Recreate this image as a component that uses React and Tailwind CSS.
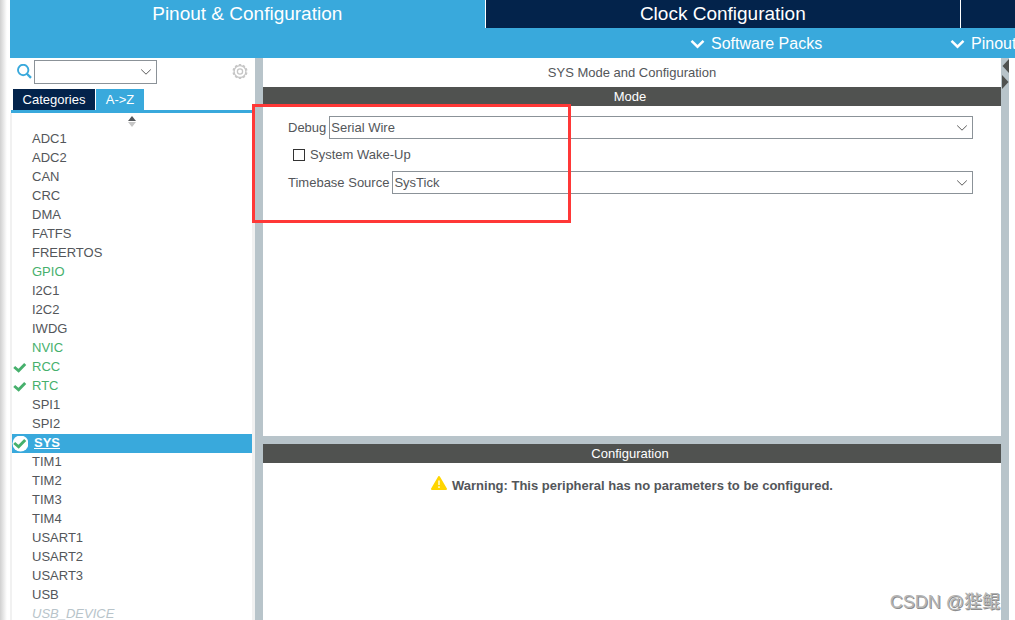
import React from "react";
import clsx from "clsx";

const peripherals = [
  { name: "ADC1" },
  { name: "ADC2" },
  { name: "CAN" },
  { name: "CRC" },
  { name: "DMA" },
  { name: "FATFS" },
  { name: "FREERTOS" },
  { name: "GPIO", state: "on" },
  { name: "I2C1" },
  { name: "I2C2" },
  { name: "IWDG" },
  { name: "NVIC", state: "on" },
  { name: "RCC", state: "on", checked: true },
  { name: "RTC", state: "on", checked: true },
  { name: "SPI1" },
  { name: "SPI2" },
  { name: "SYS", state: "selected", checked: true },
  { name: "TIM1" },
  { name: "TIM2" },
  { name: "TIM3" },
  { name: "TIM4" },
  { name: "USART1" },
  { name: "USART2" },
  { name: "USART3" },
  { name: "USB" },
  { name: "USB_DEVICE", state: "disabled" },
];

const stateClasses = {
  on: "text-[#46b06c]",
  selected: "bg-[#39a9dc] font-bold text-white",
  disabled: "text-[#b8c4ca] italic",
};

const Chevron = ({ className }) => (
  <svg viewBox="0 0 12 8" className={className} fill="none" stroke="currentColor" aria-hidden="true">
    <path d="M1.2 1.5 6 6.2 10.8 1.5" />
  </svg>
);

const Select = ({ id, label, value, className }) => (
  <div className={clsx("relative flex", className)}>
    <select
      id={id}
      aria-label={label}
      defaultValue={value}
      className="w-full appearance-none border border-[#8b9298] bg-white pr-6 pl-px text-[#53565a] outline-none"
    >
      <option>{value}</option>
    </select>
    <Chevron className="pointer-events-none absolute top-1/2 right-[5px] h-2 w-3 -translate-y-1/2 text-[#5c5c5c]" />
  </div>
);

const CheckMark = ({ selected }) => (
  <svg viewBox="0 0 16 16" className="size-4" fill="none" aria-hidden="true">
    {selected && <circle cx="8.5" cy="7.5" r="8" fill="#fff" />}
    <path d="M2.2 7 6.6 10.8 13.2 4" stroke="#46b06c" strokeWidth="2.9" />
  </svg>
);

const SearchIcon = () => (
  <svg viewBox="0 0 16 16" className="size-4 shrink-0" fill="none" stroke="#39a9dc" aria-hidden="true">
    <circle cx="7.2" cy="6" r="5.2" strokeWidth="1.9" />
    <path d="m10.9 9.8 4.1 4.1" strokeWidth="2.3" />
  </svg>
);

const teeth = [0, 36, 72, 108, 144, 180, 216, 252, 288, 324];

const GearIcon = () => (
  <svg viewBox="0 0 16 16" className="size-4" fill="none" stroke="#c6c6c6" aria-hidden="true">
    <circle cx="8" cy="7.5" r="5.9" strokeWidth="1.3" />
    <circle cx="8" cy="7.5" r="2.6" strokeWidth="1.3" />
    {teeth.map((angle) => (
      <path key={angle} d="M8 0V1.7" strokeWidth="2.4" transform={`rotate(${angle} 8 7.5)`} />
    ))}
  </svg>
);

const WarningIcon = () => (
  <svg viewBox="0 0 16 14" className="h-[14px] w-4 shrink-0" aria-hidden="true">
    <path d="M8 1 15 13H1Z" fill="#ffd500" stroke="#ffd500" strokeWidth="2" strokeLinejoin="round" />
    <path d="M8 4.5V9M8 10.3V12" stroke="#fff" strokeWidth="1.3" />
  </svg>
);

const Header = () => (
  <header className="shrink-0 bg-[#39a9dc] text-white">
    <nav className="flex h-7 text-[19px] leading-7">
      <button className="flex flex-[475] justify-center bg-[#39a9dc]">Pinout &amp; Configuration</button>
      <button className="flex flex-[475] justify-center border-l border-white bg-[#03234b]">
        Clock Configuration
      </button>
      <button aria-label="Project Manager" className="flex-[54] border-l border-white bg-[#03234b]" />
    </nav>
    <div className="flex h-[30px] justify-end overflow-hidden pt-px text-[16px] whitespace-nowrap">
      <button className="flex w-[260px] items-center gap-1.5">
        <Chevron className="h-[10px] w-[15px] stroke-2" />
        Software Packs
      </button>
      <button className="flex w-[65px] items-center gap-1.5">
        <Chevron className="h-[10px] w-[15px] shrink-0 stroke-2" />
        Pinout
      </button>
    </div>
  </header>
);

const Sidebar = () => (
  <aside className="flex w-[245px] shrink-0 flex-col">
    <div className="flex items-center pt-0.5 pr-[7px] pl-1.5">
      <SearchIcon />
      <Select label="Search peripherals" value="" className="ml-0.5 h-6 w-[123px]" />
      <button aria-label="Settings" className="ml-auto">
        <GearIcon />
      </button>
    </div>
    <div className="mt-[5px] mr-[3px] ml-px flex gap-px border-b-3 border-[#39a9dc] pl-0.5 text-white">
      <button className="h-[21px] w-[82px] bg-[#03234b]">Categories</button>
      <button className="h-[21px] w-12 bg-[#39a9dc]">A-&gt;Z</button>
    </div>
    <div className="min-h-0 flex-1 overflow-hidden border-r-3 border-l-2 border-[#f1f1f1]">
      <svg viewBox="0 0 8 11" className="mx-auto mt-[3px] mb-[3px] h-[11px] w-2" aria-hidden="true">
        <path d="M0 5 4 0 8 5Z" fill="#53565a" />
        <path d="M0 6 4 11 8 6Z" fill="#c6c6c6" />
      </svg>
      <ul className="leading-[18px]">
        {peripherals.map(({ name, state, checked }) => (
          <li key={name} className={clsx("flex h-[19px]", stateClasses[state])}>
            <span className="flex w-5 shrink-0 pt-0.5">
              {checked && <CheckMark selected={state === "selected"} />}
            </span>
            <span className={clsx(state === "selected" && "pl-0.5 underline")}>{name}</span>
          </li>
        ))}
      </ul>
    </div>
  </aside>
);

const SectionTitle = ({ children }) => (
  <h2 className="h-[19px] bg-[#505250] pr-1 text-center leading-[19px] text-white">{children}</h2>
);

const ModePanel = () => (
  <section className="relative flex-[378]">
    <h1 className="h-[29px] text-center leading-[29px]">SYS Mode and Configuration</h1>
    <SectionTitle>Mode</SectionTitle>
    <div className="flex flex-col gap-2 py-[10px] pr-7 pl-[25px]">
      <div className="flex items-center gap-[3px]">
        <label htmlFor="debug">Debug</label>
        <Select id="debug" value="Serial Wire" className="h-[23px] flex-1" />
      </div>
      <label className="flex h-4 items-center gap-[5px] pl-[5px]">
        <input type="checkbox" className="size-3 appearance-none border border-[#333] bg-white" />
        System Wake-Up
      </label>
      <div className="flex items-center gap-[3px]">
        <label htmlFor="timebase">Timebase Source</label>
        <Select id="timebase" value="SysTick" className="h-[23px] flex-1" />
      </div>
    </div>
    {/* highlight around the debug settings */}
    <div className="pointer-events-none absolute top-[46px] -left-[11px] h-[119px] w-[319px] border-3 border-[#ff3837]" />
  </section>
);

const ConfigurationPanel = () => (
  <section className="flex-[176]">
    <SectionTitle>Configuration</SectionTitle>
    <p className="flex items-start justify-center gap-[5px] pt-[13px] font-bold">
      <WarningIcon />
      Warning: This peripheral has no parameters to be configured.
    </p>
  </section>
);

export default function App() {
  return (
    <div className="relative flex h-screen overflow-hidden bg-white font-['Liberation_Sans','Noto_Sans_CJK_SC',sans-serif] text-[13px] leading-5 text-[#53565a]">
      <div className="w-[10px] shrink-0 bg-linear-to-r from-[#d0d0d0] to-white to-70%" />
      <div className="flex min-w-0 flex-1 flex-col">
        <Header />
        <div className="flex min-h-0 flex-1">
          <Sidebar />
          <div className="w-2 shrink-0 bg-[#b8c4ca]" />
          <main className="flex min-w-0 flex-1 flex-col">
            <ModePanel />
            <div className="h-2 shrink-0 bg-[#b8c4ca]" />
            <ConfigurationPanel />
          </main>
          <div className="mr-1.5 w-2 shrink-0 bg-[#b8c4ca]">
            <svg viewBox="0 0 8 32" className="h-8 w-2" fill="#505250" aria-hidden="true">
              <path d="M8 1V15L1.5 8Z" />
              <path d="M1 17V31L7.5 24Z" />
            </svg>
          </div>
        </div>
      </div>
      <span className="absolute right-[15px] bottom-1.5 text-[18px] leading-6 text-[#b4b4b4] text-shadow-[1px_1px_0_#8c8c8c]">
        CSDN @狴鲲
      </span>
    </div>
  );
}
